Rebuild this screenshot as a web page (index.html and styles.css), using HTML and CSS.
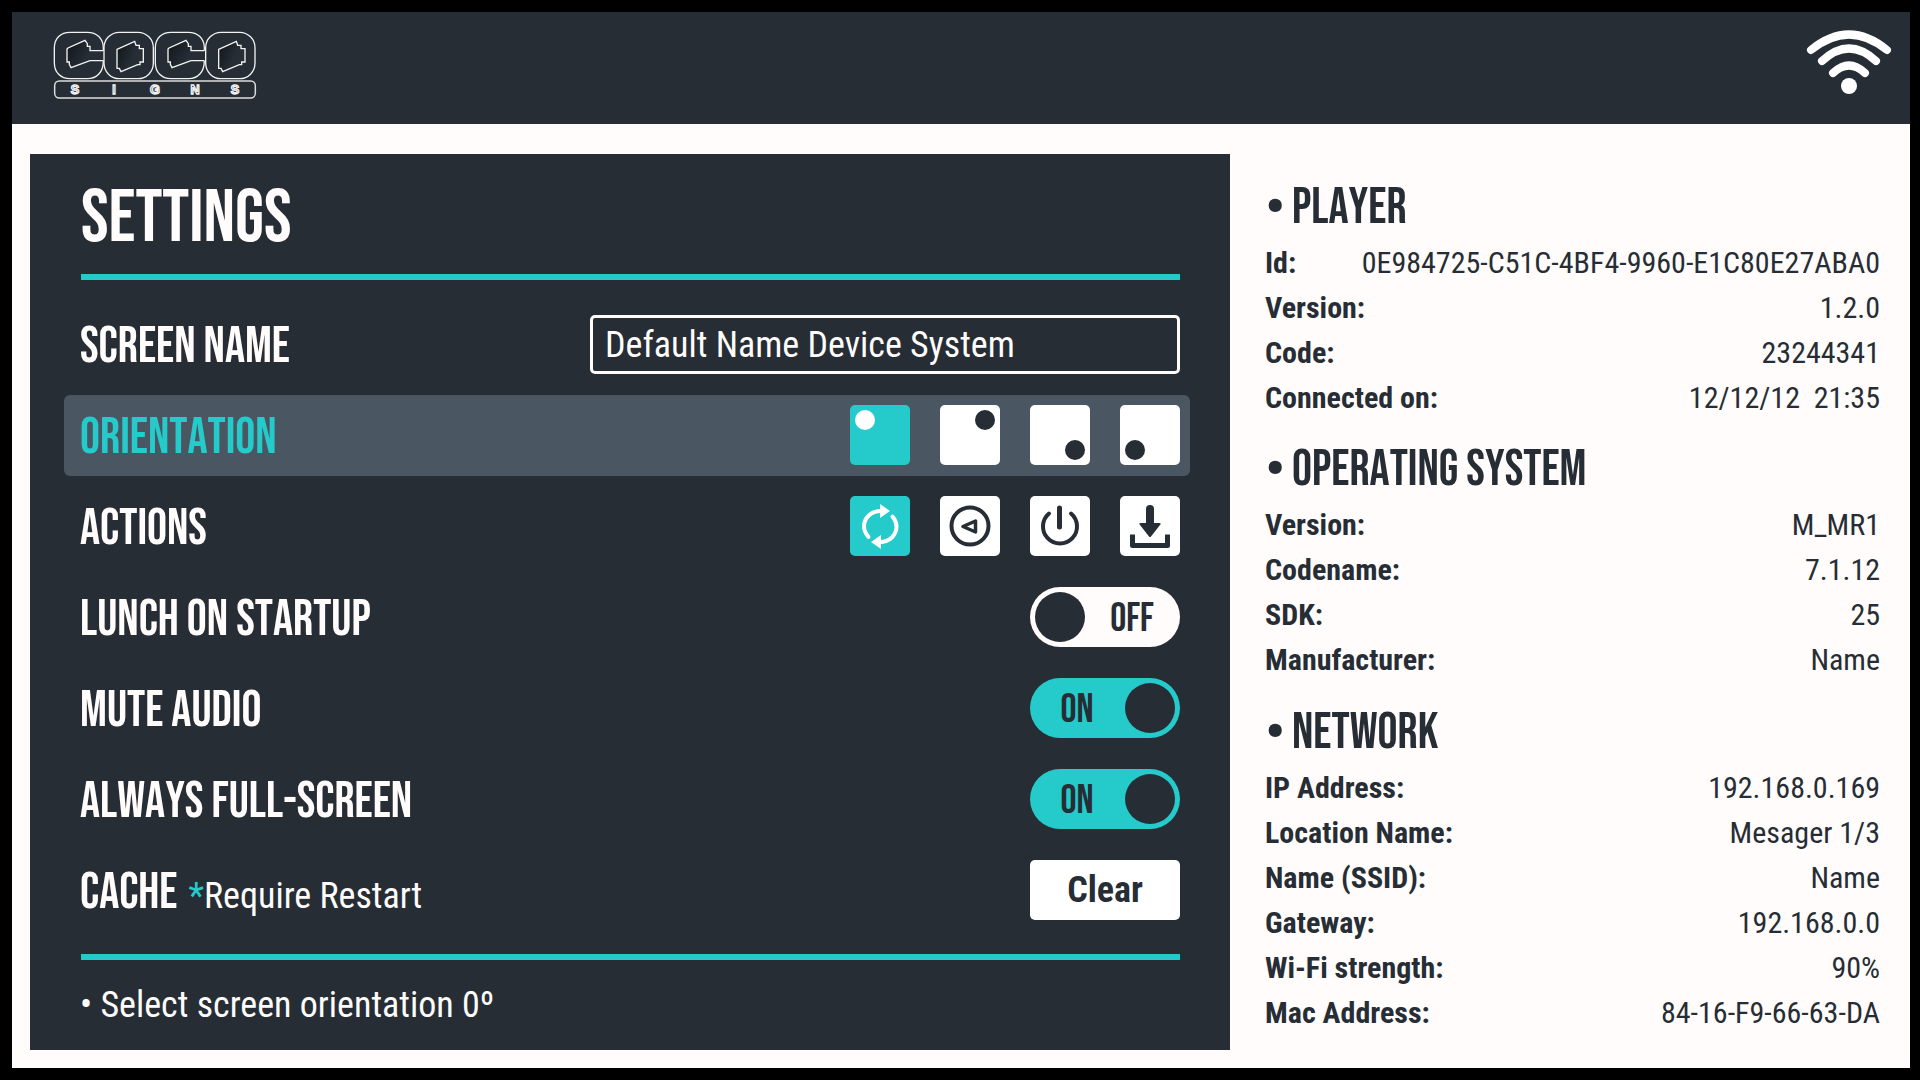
FILE: index.html
```html
<!DOCTYPE html>
<html lang="en">
<head>
<meta charset="utf-8">
<title>Settings</title>
<link rel="stylesheet" href="styles.css">
</head>
<body>
<div class="frame">
  <header class="topbar">
    <svg class="logo" viewBox="0 0 690 270" aria-label="Coco Signs">
      <defs>
        <linearGradient id="shade" x1="0" y1="0" x2="1" y2="0.5">
          <stop offset="0" stop-color="#11151a"/>
          <stop offset="0.7" stop-color="#262d35"/>
        </linearGradient>
        <g id="letter-c">
          <path class="logo-line" d="M190 92V84C190 55 170 37 142 37H90C62 37 43 55 43 84V128C43 157 62 176 90 176H142C170 176 190 157 190 122"/>
          <path class="logo-line logo-shade" d="M190 92H150V79H142V71L135 61 84 84 81 87V126H88V133L93 143 150 122H190"/>
        </g>
        <g id="letter-o">
          <rect class="logo-line" x="192" y="37" width="148" height="139" rx="46"/>
          <path class="logo-line logo-shade" d="M231 88 284 64 288 76H298V86H310V126H300V134H293L243 155 238 145H231Z"/>
        </g>
      </defs>
      <use href="#letter-c"/>
      <use href="#letter-o"/>
      <use href="#letter-c" x="303"/>
      <use href="#letter-o" x="305"/>
      <rect class="logo-bar" x="44" y="183" width="602" height="51" rx="14"/>
      <text class="logo-text" x="105" y="223">S</text>
      <text class="logo-text" x="222" y="223">I</text>
      <text class="logo-text" x="345" y="223">G</text>
      <text class="logo-text" x="465" y="223">N</text>
      <text class="logo-text" x="585" y="223">S</text>
    </svg>
    <svg class="wifi" viewBox="0 0 88 68" aria-label="Wi-Fi">
      <g class="wifi-arcs">
        <path d="M6 22Q44 -9 82 22"/>
        <path d="M17 33Q44 8 71 33"/>
        <path d="M28 45Q44 30 60 45"/>
      </g>
      <circle class="wifi-dot" cx="44" cy="58" r="8"/>
    </svg>
  </header>
  <main class="content">
    <section class="panel">
      <h1 class="title">SETTINGS</h1>
      <div class="rule"></div>
      <div class="rows">
        <div class="row">
          <span class="label">SCREEN NAME</span>
          <div class="name-field">Default Name Device System</div>
        </div>
        <div class="row row-active">
          <span class="label">ORIENTATION</span>
          <div class="btns">
            <div class="btn btn-on"><span class="dot dot-tl"></span></div>
            <div class="btn"><span class="dot dot-tr"></span></div>
            <div class="btn"><span class="dot dot-br"></span></div>
            <div class="btn"><span class="dot dot-bl"></span></div>
          </div>
        </div>
        <div class="row">
          <span class="label">ACTIONS</span>
          <div class="btns">
            <div class="btn btn-on">
              <svg class="icon icon-light" viewBox="0 0 60 60">
                <path class="icon-s4" d="M18.500 41C15.500 37.500 14 34 14 30.500 14 22 21 15 31 15"/>
                <path class="icon-s4" d="M42.500 20.500C45 23.500 46.500 27 46.500 30.500 46.500 39 39.500 46 30 46"/>
                <path class="icon-fill" d="M30 8 40 15 30 22Z"/>
                <path class="icon-fill" d="M31 39 21 46 31 53Z"/>
              </svg>
            </div>
            <div class="btn">
              <svg class="icon" viewBox="0 0 60 60">
                <circle class="icon-s4" cx="30" cy="30" r="18.500"/>
                <path class="icon-s3" d="M23 30.500 35.500 25V36Z"/>
              </svg>
            </div>
            <div class="btn">
              <svg class="icon" viewBox="0 0 60 60">
                <path class="icon-s4" d="M19 17.500A17 17 0 1 0 41 17.500"/>
                <path class="icon-s5" d="M29.500 12V31"/>
              </svg>
            </div>
            <div class="btn">
              <svg class="icon" viewBox="0 0 60 60">
                <path class="icon-s8" d="M30 13V29"/>
                <path class="icon-fill" d="M20.500 27H39.500Q41.500 27 40 29L31 40.500Q30 41.500 29 40.500L20 29Q18.500 27 20.500 27Z"/>
                <path class="icon-tray" d="M12.500 38.500V49.500H47.500V38.500"/>
              </svg>
            </div>
          </div>
        </div>
        <div class="row">
          <span class="label">LUNCH ON STARTUP</span>
          <div class="toggle toggle-off"><span class="knob"></span><span class="toggle-text">OFF</span></div>
        </div>
        <div class="row">
          <span class="label">MUTE AUDIO</span>
          <div class="toggle toggle-on"><span class="toggle-text">ON</span><span class="knob"></span></div>
        </div>
        <div class="row">
          <span class="label">ALWAYS FULL-SCREEN</span>
          <div class="toggle toggle-on"><span class="toggle-text">ON</span><span class="knob"></span></div>
        </div>
        <div class="row">
          <span class="label-group"><span class="label">CACHE</span><span class="note"><span class="star">*</span>Require Restart</span></span>
          <div class="clear-btn">Clear</div>
        </div>
      </div>
      <div class="rule rule-low"></div>
      <p class="hint">• Select screen orientation 0º</p>
    </section>
    <aside class="info">
      <section class="group">
        <h2 class="group-title"><span class="bullet">•</span>PLAYER</h2>
        <div class="kv"><b>Id:</b><span>0E984725-C51C-4BF4-9960-E1C80E27ABA0</span></div>
        <div class="kv"><b>Version:</b><span>1.2.0</span></div>
        <div class="kv"><b>Code:</b><span>23244341</span></div>
        <div class="kv"><b>Connected on:</b><span>12/12/12  21:35</span></div>
      </section>
      <section class="group group-wide">
        <h2 class="group-title"><span class="bullet">•</span>OPERATING SYSTEM</h2>
        <div class="kv"><b>Version:</b><span>M_MR1</span></div>
        <div class="kv"><b>Codename:</b><span>7.1.12</span></div>
        <div class="kv"><b>SDK:</b><span>25</span></div>
        <div class="kv"><b>Manufacturer:</b><span>Name</span></div>
      </section>
      <section class="group">
        <h2 class="group-title"><span class="bullet">•</span>NETWORK</h2>
        <div class="kv"><b>IP Address:</b><span>192.168.0.169</span></div>
        <div class="kv"><b>Location Name:</b><span>Mesager 1/3</span></div>
        <div class="kv"><b>Name (SSID):</b><span>Name</span></div>
        <div class="kv"><b>Gateway:</b><span>192.168.0.0</span></div>
        <div class="kv"><b>Wi-Fi strength:</b><span>90%</span></div>
        <div class="kv"><b>Mac Address:</b><span>84-16-F9-66-63-DA</span></div>
      </section>
    </aside>
  </main>
</div>
</body>
</html>
```
FILE: styles.css
```css
* { box-sizing: border-box; }
html, body { margin: 0; height: 100%; }
body {
  background: #000;
  padding: 12px 10px 12px 12px;
  font-family: "Roboto Condensed", Roboto, sans-serif;
  color: #fffcfb;
  overflow: hidden;
}
.frame {
  height: 1056px;
  background: #fffcfb;
  display: flex;
  flex-direction: column;
}
.topbar {
  height: 112px;
  flex: none;
  background: #262d35;
  display: flex;
  justify-content: space-between;
  align-items: flex-start;
  padding: 8px 17px 0 28px;
}
.logo { width: 230px; height: 90px; display: block; }
.logo-line { fill: none; stroke: #f2f2f2; stroke-width: 4; }
.logo-shade { fill: url(#shade); }
.logo-bar { fill: none; stroke: #dcdcdc; stroke-width: 4.5; }
.logo-text {
  font-family: "Liberation Sans", sans-serif;
  font-weight: 700;
  font-size: 38px;
  text-anchor: middle;
  fill: #262d35;
  stroke: #f2f2f2;
  stroke-width: 4;
}
.wifi { width: 88px; height: 68px; margin-top: 8px; display: block; overflow: visible; }
.wifi-arcs path { fill: none; stroke: #fff; stroke-width: 8; stroke-linecap: round; }
.wifi-dot { fill: #fff; }

.content {
  flex: 1;
  display: flex;
  gap: 35px;
  padding: 30px 30px 18px 18px;
}
.panel {
  width: 1200px;
  flex: none;
  background: #262d35;
  padding: 0 50px 0 51px;
  display: flex;
  flex-direction: column;
}
.title {
  margin: 0;
  height: 120px;
  font: 400 74px/129px "Bebas Neue", sans-serif;
  font-kerning: none;
}
.rule { height: 6px; flex: none; background: #25cbcb; }
.rows { padding-top: 24px; display: flex; flex-direction: column; gap: 10px; }
.row {
  height: 81px;
  margin: 0 -10px 0 -17px;
  padding: 0 10px 1px 17px;
  display: flex;
  align-items: center;
  justify-content: space-between;
  border-radius: 6px;
}
.row-active { background: #4a5661; }
.row-active .label { color: #25cbcb; }
.label {
  font: 400 50px/1 "Bebas Neue", sans-serif;
  font-kerning: none;
  margin-left: -1px;
  padding-top: 5px;
}
.label-group { display: flex; align-items: baseline; gap: 11px; }
.note { font-size: 36px; }
.star { color: #25cbcb; }
.name-field {
  width: 590px;
  height: 59px;
  border: 3px solid #fffcfb;
  border-radius: 5px;
  padding-left: 12px;
  font-size: 36px;
  line-height: 54px;
}
.btns { display: flex; gap: 30px; }
.btn {
  position: relative;
  width: 60px;
  height: 60px;
  background: #fff;
  border-radius: 5px;
}
.btn-on { background: #25cbcb; }
.dot {
  position: absolute;
  width: 20px;
  height: 20px;
  border-radius: 50%;
  background: #262d35;
}
.btn-on .dot { background: #fff; }
.dot-tl { left: 5px; top: 5px; }
.dot-tr { right: 5px; top: 5px; }
.dot-br { right: 5px; bottom: 5px; }
.dot-bl { left: 5px; bottom: 5px; }
.icon { width: 60px; height: 60px; display: block; color: #262d35; }
.icon-light { color: #fff; }
.icon-s3, .icon-s4, .icon-s5, .icon-s8, .icon-tray { fill: none; stroke: currentColor; stroke-linejoin: round; }
.icon-s3 { stroke-width: 3.5; }
.icon-s4 { stroke-width: 4; stroke-linecap: round; }
.icon-s5 { stroke-width: 5; stroke-linecap: round; }
.icon-s8 { stroke-width: 8; stroke-linecap: round; }
.icon-tray { stroke-width: 5; }
.icon-fill { fill: currentColor; }
.toggle {
  width: 150px;
  height: 60px;
  border-radius: 30px;
  padding: 5px;
  display: flex;
  align-items: center;
  justify-content: space-between;
  color: #262d35;
}
.toggle-off { background: #fffcfb; }
.toggle-on { background: #25cbcb; }
.knob {
  width: 50px;
  height: 50px;
  border-radius: 50%;
  background: #262d35;
  flex: none;
}
.toggle-text { font: 400 40px/1 "Bebas Neue", sans-serif; flex: 1; text-align: center; padding-top: 3px; }
.toggle-off .toggle-text { padding-left: 4px; }
.toggle-on .toggle-text { padding-right: 6px; }
.clear-btn {
  width: 150px;
  height: 60px;
  background: #fff;
  border-radius: 5px;
  color: #262d35;
  font-weight: 700;
  font-size: 36px;
  line-height: 60px;
  text-align: center;
}
.rule-low { margin-top: 23px; }
.hint { margin: 0 0 0 -1px; padding-top: 21px; font-size: 36px; line-height: 48px; }

.info { flex: 1; padding-top: 16px; color: #262d35; font-size: 30px; }
.group { margin-bottom: 12px; }
.group-wide { margin-bottom: 13px; }
.group-title {
  margin: 0;
  height: 70px;
  padding-top: 5px;
  font: 400 50px/70px "Bebas Neue", sans-serif;
  font-kerning: none;
  display: flex;
  align-items: center;
}
.bullet { width: 27px; font-family: Roboto, sans-serif; font-weight: 700; flex: none; line-height: 1; font-size: 56px; margin-top: -2px; }
.kv {
  height: 45px;
  line-height: 45px;
  display: flex;
  justify-content: space-between;
  white-space: pre;
}
.kv b { font-weight: 700; }
```
